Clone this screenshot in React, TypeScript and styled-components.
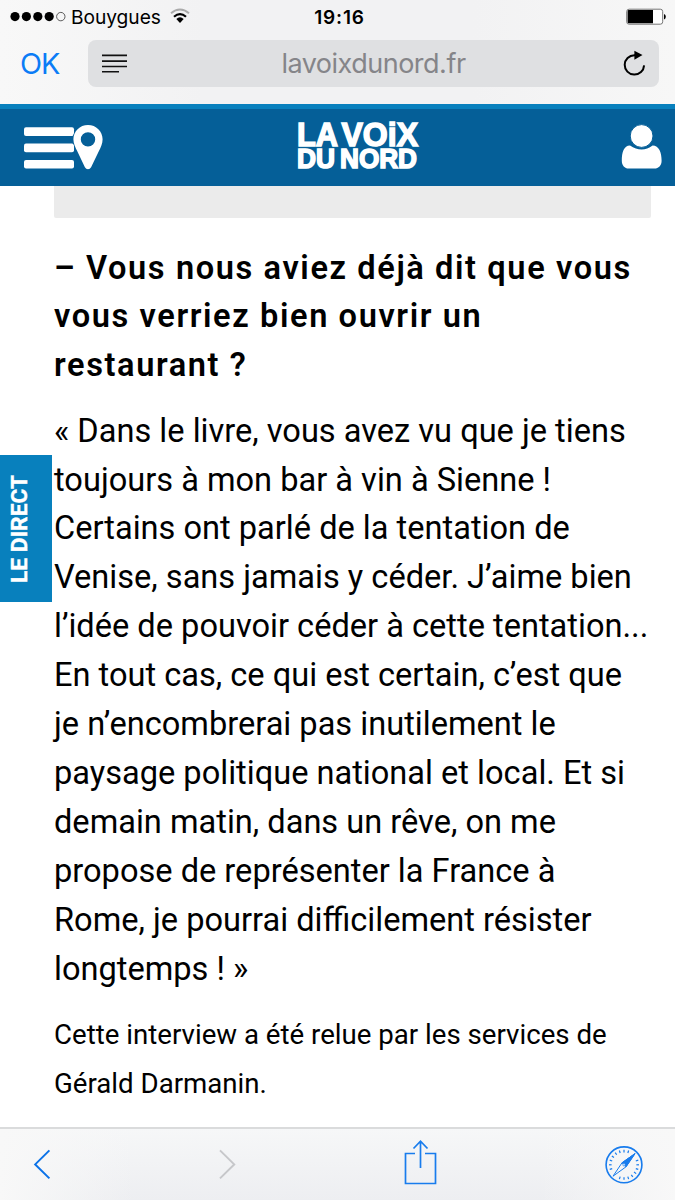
import React from "react";
import styled, { createGlobalStyle } from "styled-components";

const GlobalStyle = createGlobalStyle`
  * { box-sizing: border-box; }
  body { margin: 0; background: #fff; }
  svg { display: block; flex: none; }
`;

const Screen = styled.div`
  width: 675px;
  height: 1200px;
  display: flex;
  flex-direction: column;
  overflow: hidden;
  position: relative;
  background: #fff;
  color: #000;
  font-family: Roboto, sans-serif;
`;

const BrowserTop = styled.header`
  height: 104px;
  flex: none;
  background: linear-gradient(90deg, #f8f8f8, #f2f2f3 30%, #f2f2f3 70%, #f7f7f7);
  font-family: Inter, sans-serif;
`;

const StatusBar = styled.div`
  height: 34px;
  display: grid;
  grid-template-columns: 1fr auto 1fr;
  align-items: center;
  padding: 0 9px 0 10px;
`;

const Carrier = styled.div`
  display: flex;
  align-items: center;
  font-size: 19.2px;
  letter-spacing: -0.05px;
  line-height: 34px;
`;

const CarrierName = styled.span`
  margin: 0 9px 0 5px;
`;

const Clock = styled.div`
  padding-left: 3px;
  font-size: 19px;
  font-weight: 600;
  letter-spacing: 0.8px;
`;

const BatterySlot = styled.div`
  justify-self: end;
`;

const AddressRow = styled.div`
  height: 53px;
  display: flex;
  align-items: center;
  padding: 6px 16px 0 20px;
`;

const DoneButton = styled.button`
  width: 68px;
  padding: 0;
  border: 0;
  background: none;
  text-align: left;
  font: 400 28.8px/46px Inter, sans-serif;
  letter-spacing: -1px;
  color: #0b7cf6;
`;

const AddressField = styled.div`
  flex: 1;
  height: 47px;
  border-radius: 8px;
  background: #dfe0e2;
  display: flex;
  align-items: center;
  justify-content: space-between;
  padding: 0 12px 0 14px;
`;

const Domain = styled.span`
  margin-right: 4px;
  font-size: 27px;
  letter-spacing: -0.5px;
  color: #858589;
`;

const SiteHeader = styled.div`
  height: 82px;
  flex: none;
  border-top: 5px solid #0880bd;
  background: #055f98;
  display: grid;
  grid-template-columns: 1fr auto 1fr;
  align-items: center;
  padding: 0 13px 2px 24px;
`;

const LogoSlot = styled.div`
  padding-left: 32px;
`;

const AccountSlot = styled.div`
  justify-self: end;
`;

const Article = styled.main`
  flex: 1;
  padding: 0 24px 0 54px;
`;

const Placeholder = styled.div`
  height: 32px;
  background: #ebebeb;
  border-radius: 0 0 2px 2px;
`;

const Question = styled.h2`
  margin: 25.5px 0 0;
  font-size: 32.6px;
  font-weight: 600;
  line-height: 48.9px;
  letter-spacing: 1.6px;
  white-space: nowrap;
`;

const Answer = styled.p`
  margin: 16.4px 0 0;
  font-size: 32.6px;
  line-height: 48.9px;
  white-space: nowrap;
`;

const Note = styled.p`
  margin: 17px 0 0;
  font-size: 27.65px;
  line-height: 49px;
  white-space: nowrap;
`;

const LiveTab = styled.div`
  position: absolute;
  left: 0;
  top: 455px;
  width: 52px;
  height: 147px;
  background: #0880bd;
  display: flex;
  align-items: center;
  justify-content: center;
  padding-right: 13px;
`;

const LiveLabel = styled.span`
  writing-mode: vertical-rl;
  transform: rotate(180deg);
  color: #fff;
  font-size: 22.7px;
  line-height: 26px;
  font-weight: 700;
  -webkit-text-stroke: 0.4px #fff;
  white-space: nowrap;
`;

const Toolbar = styled.nav`
  height: 73px;
  flex: none;
  border-top: 2px solid #dadbdc;
  background: linear-gradient(90deg, #f8f8f8, rgba(248, 248, 248, 0) 20%, rgba(248, 248, 248, 0) 80%, #f8f8f8),
    linear-gradient(180deg, #f6f7f8, #edeef1);
  display: grid;
  grid-template-columns: 184.5px 186.5px 202px auto;
  align-items: center;
  padding: 0 0 1px 32px;
`;

const Lines = ({ text }: { text: string[] }) => (
  <>
    {text.map((line, i) => (
      <React.Fragment key={line}>
        {i > 0 && <br />}
        {line}
      </React.Fragment>
    ))}
  </>
);

const SignalDots = () => (
  <svg width="56" height="12" viewBox="0 0 56 12">
    {[5, 16.4, 27.8, 39.2].map((x) => (
      <circle key={x} cx={x} cy="5.6" r="4.6" />
    ))}
    <circle cx="50.8" cy="5.6" r="4.2" fill="none" stroke="#333" strokeWidth=".8" />
  </svg>
);

const Wifi = () => (
  <svg width="20" height="18" viewBox="0 0 20 18" fill="none">
    <path d="M1 5.2Q10-2.2 19 5.2" stroke="#aaa" strokeWidth="2" />
    <path d="M4 8.7Q10 3.4 16 8.7" stroke="#000" strokeWidth="2.2" />
    <path d="M6.3 11Q10 7.6 13.7 11L10 15Z" fill="#000" />
  </svg>
);

const Battery = () => (
  <svg width="40" height="18" viewBox="0 0 40 18">
    <rect x=".7" y="1.2" width="36" height="15" rx="2.4" fill="#fff" stroke="#666" strokeWidth=".9" />
    <path d="M2.8 2.1H27v13.2H2.8A1.2 1.2 0 0 1 1.6 14.1V3.3A1.2 1.2 0 0 1 2.8 2.1Z" />
    <path d="M38 6q1.8.5 1.8 2.7T38 11.4Z" />
  </svg>
);

const Reader = () => (
  <svg width="26" height="20" viewBox="0 0 26 20" stroke="#111" strokeWidth="1.6">
    <path d="M0 1.4H25M0 7.1H25M0 12.5H25M0 17.8H17" />
  </svg>
);

const Reload = () => (
  <svg width="24" height="28" viewBox="0 0 24 28">
    <path d="M13.5 5.2H11.4A9.7 9.7 0 1 0 21.1 15.4" fill="none" stroke="#000" strokeWidth="2" />
    <path d="M11.4.7 19.5 5.1 11.4 9.8Z" />
  </svg>
);

const MenuPin = () => (
  <svg width="80" height="46" viewBox="0 0 80 46" fill="#fff">
    <rect x="0" y="3.3" width="50" height="8.6" rx="2" />
    <rect x="0" y="19.5" width="50" height="8.8" rx="2" />
    <rect x="0" y="36" width="50" height="8.6" rx="2" />
    <path
      fillRule="evenodd"
      stroke="#055f98"
      strokeWidth="1.4"
      paintOrder="stroke"
      d="M64 1C55.8 1 49.4 7.4 49.4 15.3C49.4 20 51.5 23.5 53.3 27.3L60.9 43.2Q62 45.3 64 45.3T67.1 43.2L74.8 27.3C76.7 23.5 78.6 20 78.6 15.3C78.6 7.4 72.2 1 64 1ZM64 8.2A7.2 7.2 0 1 1 64 22.6A7.2 7.2 0 1 1 64 8.2Z"
    />
  </svg>
);

const Logo = () => (
  <svg
    width="124"
    height="56"
    viewBox="0 -2 124 56"
    overflow="visible"
    fill="#fff"
    stroke="#fff"
    strokeWidth="1.6"
    fontFamily="'Liberation Sans', sans-serif"
    fontWeight="700"
  >
    <text x="0" y="24.7" fontSize="33.5" textLength="41" lengthAdjust="spacingAndGlyphs">LA</text>
    <text x="44.5" y="24.7" fontSize="33.5" textLength="76.5" lengthAdjust="spacingAndGlyphs">VOiX</text>
    <text x="0" y="46.7" fontSize="27" textLength="38" lengthAdjust="spacingAndGlyphs">DU</text>
    <text x="43" y="46.7" fontSize="27" textLength="77" lengthAdjust="spacingAndGlyphs">NORD</text>
  </svg>
);

const Account = () => (
  <svg width="42" height="46" viewBox="0 0 42 46" fill="#fff">
    <path d="M10 21.5C3.8 21.5 1.8 28.5 1.8 36.7C1.8 41.6 4.8 44.5 8.6 44.5H34.4C38.6 44.5 41.6 41.6 41.6 36.7C41.6 28.5 39 21.5 32.6 21.5Q27.4 25.4 21.6 25.4T10 21.5Z" />
    <circle cx="21.6" cy="12" r="11.4" stroke="#055f98" strokeWidth="1" />
  </svg>
);

const Chevron = ({ forward = false }: { forward?: boolean }) => (
  <svg width="20" height="32" viewBox="0 0 20 32" fill="none" stroke={forward ? "#c6c7ca" : "#0b72e8"} strokeWidth="2">
    <path d={forward ? "M3 2.4 17.2 16.4 3 30.4" : "M17.4 2.4 3.2 16.4 17.4 30.4"} />
  </svg>
);

const Share = () => (
  <svg width="34" height="50" viewBox="0 0 34 50" fill="none" stroke="#187ced" strokeWidth="1.7">
    <path d="M12 14.5H2.5V44.5H32.5V14.5H22M17.5 29V3M10.5 9.5 17.5 2.2 24.5 9.5" />
  </svg>
);

const Compass = () => (
  <svg width="38" height="38" viewBox="0 0 38 38" overflow="visible" fill="none" stroke="#187ced">
    <g transform="translate(0 .8)">
      <circle cx="19" cy="19" r="17.9" strokeWidth="1.6" />
      {Array.from({ length: 20 }, (_, i) => i * 18)
        .filter((a) => a % 180 !== 36 && a % 180 !== 54)
        .map((a) => (
          <path key={a} d="M19 4V6.6" strokeWidth="1.2" transform={`rotate(${a} 19 19)`} />
        ))}
      <path d="M30 7.8 17 17 8 30.4 21 21Z" strokeWidth="1" />
      <path d="M30 7.8 17 17 21 21Z" fill="#187ced" />
      <circle cx="19" cy="19" r="1.2" fill="#fff" strokeWidth=".7" />
    </g>
  </svg>
);

export default function App() {
  return (
    <Screen>
      <GlobalStyle />
      <BrowserTop>
        <StatusBar>
          <Carrier>
            <SignalDots />
            <CarrierName>Bouygues</CarrierName>
            <Wifi />
          </Carrier>
          <Clock>19:16</Clock>
          <BatterySlot>
            <Battery />
          </BatterySlot>
        </StatusBar>
        <AddressRow>
          <DoneButton>OK</DoneButton>
          <AddressField>
            <Reader />
            <Domain>lavoixdunord.fr</Domain>
            <Reload />
          </AddressField>
        </AddressRow>
      </BrowserTop>
      <SiteHeader>
        <MenuPin />
        <LogoSlot>
          <Logo />
        </LogoSlot>
        <AccountSlot>
          <Account />
        </AccountSlot>
      </SiteHeader>
      <Article>
        <Placeholder />
        <Question>
          <Lines text={["– Vous nous aviez déjà dit que vous", "vous verriez bien ouvrir un", "restaurant ?"]} />
        </Question>
        <Answer>
          <Lines
            text={[
              "« Dans le livre, vous avez vu que je tiens",
              "toujours à mon bar à vin à Sienne !",
              "Certains ont parlé de la tentation de",
              "Venise, sans jamais y céder. J’aime bien",
              "l’idée de pouvoir céder à cette tentation...",
              "En tout cas, ce qui est certain, c’est que",
              "je n’encombrerai pas inutilement le",
              "paysage politique national et local. Et si",
              "demain matin, dans un rêve, on me",
              "propose de représenter la France à",
              "Rome, je pourrai difficilement résister",
              "longtemps ! »",
            ]}
          />
        </Answer>
        <Note>
          <Lines text={["Cette interview a été relue par les services de", "Gérald Darmanin."]} />
        </Note>
      </Article>
      <LiveTab>
        <LiveLabel>LE DIRECT</LiveLabel>
      </LiveTab>
      <Toolbar>
        <Chevron />
        <Chevron forward />
        <Share />
        <Compass />
      </Toolbar>
    </Screen>
  );
}
